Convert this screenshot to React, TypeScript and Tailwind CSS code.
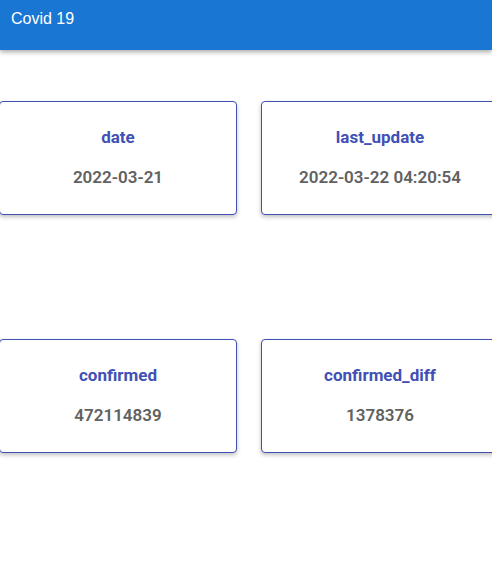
import React from 'react';

interface Stat {
  label: string;
  value: string;
}

const rows: Stat[][] = [
  [
    { label: 'date', value: '2022-03-21' },
    { label: 'last_update', value: '2022-03-22 04:20:54' },
  ],
  [
    { label: 'confirmed', value: '472114839' },
    { label: 'confirmed_diff', value: '1378376' },
  ],
];

function StatCard({ stat }: { stat: Stat }) {
  return (
    <div className="w-[238px] shrink-0 h-[114px] bg-white rounded-[4px] border border-[#3f51b5] shadow-[0_2px_4px_rgba(0,0,0,0.25)] flex flex-col items-center pt-[23px] gap-[16px]">
      <div className="text-[17px] leading-[24px] font-bold text-[#3f51b5]">{stat.label}</div>
      <div className="text-[17px] leading-[24px] font-semibold text-[#616161]">{stat.value}</div>
    </div>
  );
}

export default function App() {
  return (
    <div className="w-[492px] h-[566px] bg-white overflow-hidden" style={{ fontFamily: 'Roboto, sans-serif' }}>
      <header className="h-[50px] bg-[#1976d2] shadow-[0_2px_5px_rgba(0,0,0,0.35)] px-[11px] pt-[7px] relative z-10">
        <span className="text-white text-[16px] leading-[20px]" style={{ fontFamily: '"Liberation Sans", Arial, sans-serif' }}>
          Covid 19
        </span>
      </header>
      <main className="flex flex-col gap-[124px] pt-[51px] ml-[-1px]">
        {rows.map((row, i) => (
          <div key={i} className="flex gap-[24px]">
            {row.map((s) => (
              <StatCard key={s.label} stat={s} />
            ))}
          </div>
        ))}
      </main>
    </div>
  );
}
